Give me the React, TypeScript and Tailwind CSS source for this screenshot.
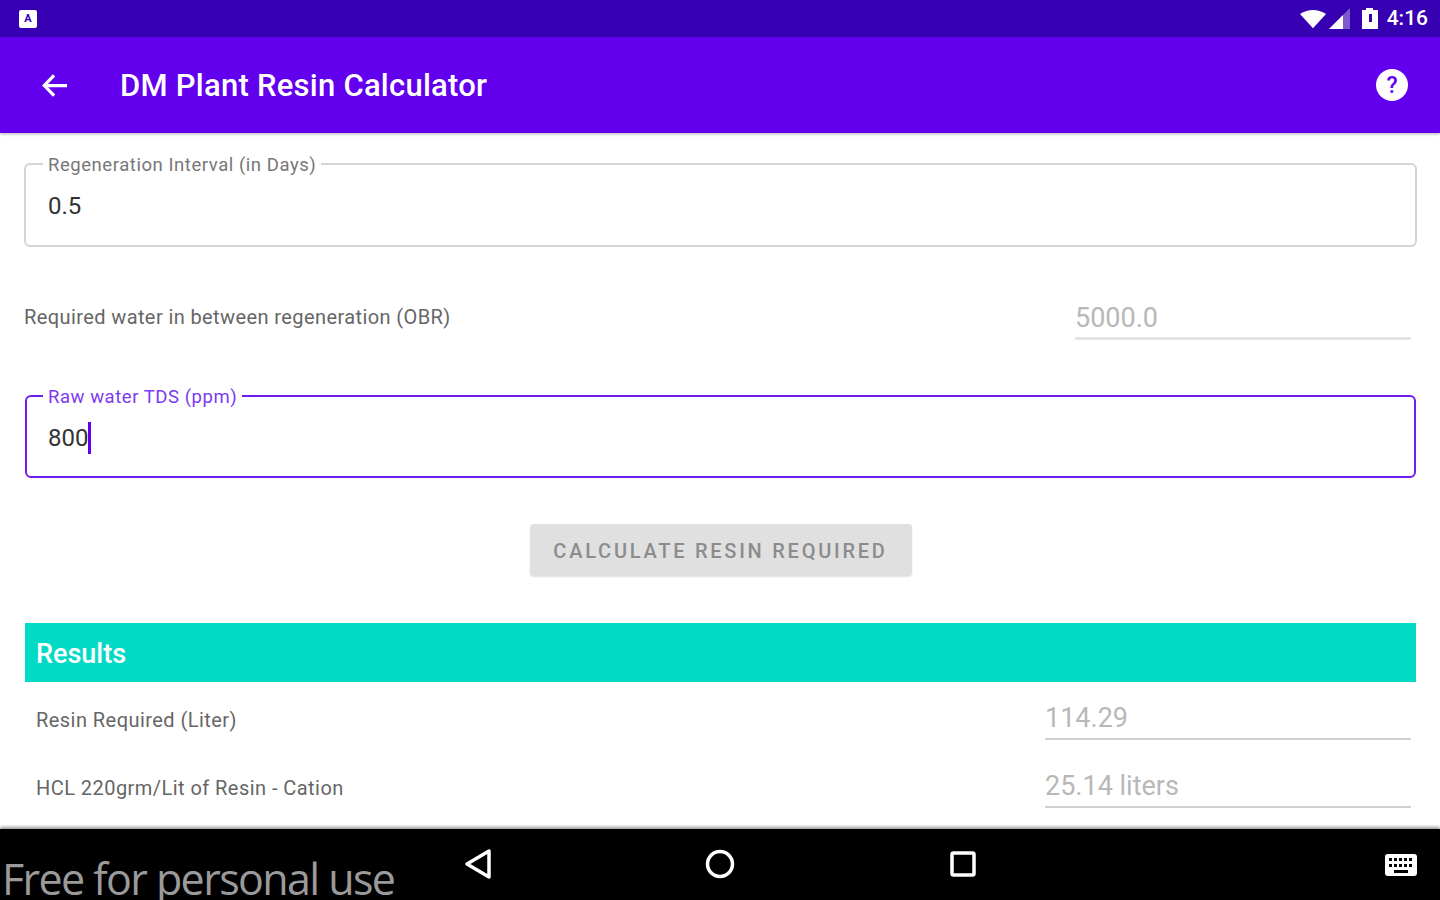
function StatusBar() {
  return (
    <div className="h-[37px] bg-[#3700b3] flex items-center justify-between pl-[19px] pr-[12px]">
      <div className="w-[18px] h-[18px] bg-white rounded-[2px] flex items-center justify-center text-[#3700b3] text-[11px] font-bold leading-none">
        A
      </div>
      <div className="flex items-center">
        <svg width="26" height="20" viewBox="0 0 28 20" className="mr-[3px]">
          <path d="M0 4.5 Q14 -4 28 4.5 L14 20 Z" fill="#fff" />
        </svg>
        <svg width="22" height="22" viewBox="0 0 22 22" className="mr-[10px]">
          <path d="M0 21 L21 0 V21 Z" fill="#fff" fillOpacity="0.35" />
          <path d="M0 21 L14 7 V21 Z" fill="#fff" />
        </svg>
        <svg width="18" height="24" viewBox="0 0 18 24" className="mr-[8px]">
          <path d="M5 1 H12 V3 H17 V22 H1 V3 H5 Z" fill="#fff" />
          <path d="M8 7 H11 V15 H8 Z" fill="#3700b3" />
        </svg>
        <span className="text-white text-[21px] font-medium leading-none">4:16</span>
      </div>
    </div>
  );
}

function AppBar() {
  return (
    <div className="h-[96px] bg-[#6200ee] flex items-center pl-[42px] pr-[31px] shadow-[0_1px_3px_rgba(0,0,0,0.3)] relative">
      <svg width="26" height="25" viewBox="0 0 28 26" fill="none" stroke="#fff" strokeWidth="3.5">
        <path d="M27 13 H3 M13 2 L2.5 13 L13 24" />
      </svg>
      <h1 className="ml-[52px] text-white text-[31px] font-medium leading-none tracking-[0.25px]">DM Plant Resin Calculator</h1>
      <svg width="34" height="34" viewBox="0 0 34 34" className="ml-auto">
        <circle cx="17" cy="17" r="16" fill="#fff" />
        <text x="17" y="25" textAnchor="middle" fontSize="23" fontWeight="500" fill="#6200ee" fontFamily="Roboto, sans-serif">?</text>
      </svg>
    </div>
  );
}

function OutlinedField({ label, value, focused }: { label: string; value: string; focused?: boolean }) {
  return (
    <fieldset
      className={`rounded-[6px] border-2 ${focused ? 'h-[84px] mx-[1px] px-[21px] border-[#6f1df0]' : 'h-[85px] px-[22px] border-[#d4d4d4]'}`}
    >
      <legend className={`ml-[-5px] px-[5px] text-[18.5px] leading-[7px] h-[4px] tracking-[0.55px] ${focused ? 'text-[#7c3af2]' : 'text-[#777777]'}`}>
        {label}
      </legend>
      <div className={`flex items-center text-[24px] leading-[30px] text-[#333333] ${focused ? 'mt-[24px]' : 'mt-[25px]'}`}>
        {value}
        {focused && <span className="w-[2.5px] h-[32px] bg-[#6200ee]" />}
      </div>
    </fieldset>
  );
}

function ResultRow({ label, value }: { label: string; value: string }) {
  return (
    <div className="flex items-center justify-between h-[68px] pl-[11px] pr-[5px]">
      <span className="pt-[2px] text-[20px] text-[#666666] leading-none tracking-[0.45px]">{label}</span>
      <div className="w-[366px] h-[42px] border-b-2 border-[#d0d0d0] text-[27px] text-[#b8b8b8] leading-[40px]">{value}</div>
    </div>
  );
}

function NavBar() {
  return (
    <div className="h-[71px] bg-black relative flex items-center justify-center gap-[213px] shadow-[0_-2px_3px_rgba(0,0,0,0.4)]">
      <svg width="28" height="32" viewBox="0 0 28 32" fill="none" stroke="#fff" strokeWidth="3.5" className="-mt-[1px]">
        <path d="M25 3 V29 L3 16 Z" strokeLinejoin="round" />
      </svg>
      <svg width="30" height="30" viewBox="0 0 30 30" fill="none" stroke="#fff" strokeWidth="3.5" className="-mt-[1px]">
        <circle cx="15" cy="15" r="12.5" />
      </svg>
      <svg width="28" height="28" viewBox="0 0 28 28" fill="none" stroke="#fff" strokeWidth="3.5" className="-mt-[1px] ml-[1px]">
        <rect x="3" y="3" width="22" height="22" rx="1.5" />
      </svg>
      <svg width="32" height="22" viewBox="0 0 32 22" className="absolute right-[23px] top-[25px]">
        <rect width="32" height="22" rx="3" fill="#fff" />
        <g fill="#000">
          <rect x="4" y="4" width="3" height="3" />
          <rect x="9" y="4" width="3" height="3" />
          <rect x="14" y="4" width="3" height="3" />
          <rect x="19" y="4" width="3" height="3" />
          <rect x="24" y="4" width="3" height="3" />
          <rect x="4" y="10" width="3" height="3" />
          <rect x="9" y="10" width="3" height="3" />
          <rect x="14" y="10" width="3" height="3" />
          <rect x="19" y="10" width="3" height="3" />
          <rect x="24" y="10" width="3" height="3" />
          <rect x="9" y="16" width="14" height="3" />
        </g>
      </svg>
      <span className="absolute left-[2px] top-[25px] text-[43px] leading-[50px] text-[#9a9a9a] font-['Open_Sans','Noto_Sans',sans-serif] tracking-[-1.6px] whitespace-nowrap">
        Free for personal use
      </span>
    </div>
  );
}

export default function App() {
  return (
    <div className="w-[1440px] h-[900px] overflow-hidden flex flex-col bg-white font-['Roboto',sans-serif]">
      <StatusBar />
      <AppBar />
      <main className="flex-1 overflow-hidden pt-[29px] pl-[24px] pr-[23px]">
        <OutlinedField label="Regeneration Interval (in Days)" value="0.5" />

        <div className="mt-[47px] flex items-center justify-between h-[46px] pr-[6px]">
          <span className="text-[20px] text-[#666666] leading-none tracking-[0.4px]">Required water in between regeneration (OBR)</span>
          <div className="w-[336px] h-[46px] border-b-[3px] border-[#e4e4e4] text-[27px] text-[#b8b8b8] leading-[48px]">5000.0</div>
        </div>

        <div className="mt-[54px]">
          <OutlinedField label="Raw water TDS (ppm)" value="800" focused />
        </div>

        <div className="mt-[46px] flex justify-center">
          <button className="w-[382px] h-[52px] pt-[2px] rounded-[4px] bg-[#e0e0e0] text-[20px] font-medium tracking-[2.75px] text-[#8c8c8c] shadow-[0_1px_2px_rgba(0,0,0,0.12)]">
            CALCULATE RESIN REQUIRED
          </button>
        </div>

        <div className="mt-[47px] h-[59px] mx-[1px] pt-[3px] bg-[#03dac5] flex items-center pl-[11px] text-white text-[27px] font-medium">
          Results
        </div>
        <div className="mx-[1px] pt-[3px]">
          <ResultRow label="Resin Required (Liter)" value="114.29" />
          <ResultRow label="HCL 220grm/Lit of Resin - Cation" value="25.14 liters" />
        </div>
      </main>
      <NavBar />
    </div>
  );
}
